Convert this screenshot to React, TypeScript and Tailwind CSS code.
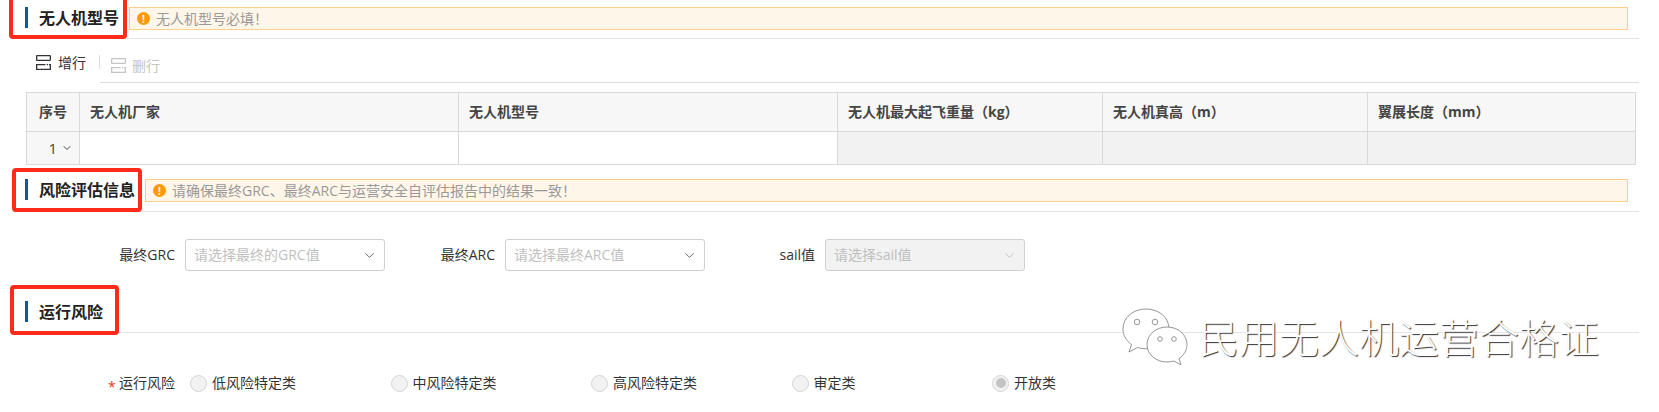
import { ChevronDown } from "lucide-react";

const columns = [
  { title: "序号", width: "w-[53px]", align: "px-0 text-center" },
  { title: "无人机厂家", width: "w-[379px]", align: "px-[10px] text-left" },
  { title: "无人机型号", width: "w-[379px]", align: "px-[10px] text-left" },
  { title: "无人机最大起飞重量（kg）", width: "w-[265px]", align: "px-[10px] text-left" },
  { title: "无人机真高（m）", width: "w-[265px]", align: "px-[10px] text-left" },
  { title: "翼展长度（mm）", width: "w-[268px]", align: "px-[10px] text-left" },
];

const riskOptions = ["低风险特定类", "中风险特定类", "高风险特定类", "审定类", "开放类"];

function Alert({ text }: { text: string }) {
  return (
    <div className="ml-[10px] flex h-[23px] flex-1 items-center border border-[#fbd08a] bg-[#fff6ea] pl-[7px] text-sm leading-none text-[#999]">
      <span className="mr-[6px] flex h-[13px] w-[13px] items-center justify-center rounded-full bg-[#ff9900] text-[10px] font-bold text-white">
        !
      </span>
      {text}
    </div>
  );
}

function SectionHead({ title, alert, height }: { title: string; alert?: string; height: string }) {
  return (
    <div className={`ml-[12px] mr-[20px] flex items-start border-b border-[#e4e4e4] pl-[13px] pr-[11px] pt-[7px] ${height}`}>
      <span className="h-[21px] w-[3px] bg-[#0b5a9e]" />
      <h2 className="ml-[11px] text-base font-bold leading-[22px] text-[#222]">{title}</h2>
      {alert && <Alert text={alert} />}
    </div>
  );
}

function RowIcon({ color }: { color: string }) {
  return (
    <svg width="15" height="15" viewBox="0 0 15 15" fill="none" stroke={color} strokeWidth="1.3">
      <rect x="0.65" y="0.65" width="13.7" height="4.700" rx="0.5" />
      <path d="M9.500 9.650H0.650v4.700h13.700v-4.700H13" />
      <circle cx="11.400" cy="9.600" r="0.8" fill={color} stroke="none" />
    </svg>
  );
}

function SelectBox({ label, placeholder, disabled }: { label: string; placeholder: string; disabled?: boolean }) {
  return (
    <div className="flex w-[320px] items-center">
      <label className="w-[110px] pr-[10px] text-right text-sm leading-none text-[#333]">{label}</label>
      <div
        className={`flex h-[32px] w-[200px] items-center justify-between rounded-[3px] border border-[#d0d0d0] pl-[8px] pr-[7px] text-sm leading-none text-[#bfbfbf] ${
          disabled ? "bg-[#f2f2f2]" : "bg-white"
        }`}
      >
        <span>{placeholder}</span>
        <ChevronDown size={15} strokeWidth={1.6} className={disabled ? "text-[#c4c4c4]" : "text-[#666]"} />
      </div>
    </div>
  );
}

function Radio({ label, checked }: { label: string; checked?: boolean }) {
  return (
    <div className="flex w-[200.5px] items-center">
      <span className="flex h-[17px] w-[17px] items-center justify-center rounded-full border border-[#d4d4d4] bg-[#f2f2f2]">
        {checked && <span className="h-[10px] w-[10px] rounded-full bg-[#c4c4c4]" />}
      </span>
      <span className="ml-[5px] text-sm leading-none text-[#333]">{label}</span>
    </div>
  );
}

function WechatMark() {
  return (
    <svg width="66" height="57" viewBox="0 0 66 57" fill="#fff" stroke="#8a8a8a" strokeWidth="0.9">
      <path d="M24 1C11 1 1 9.500 1 21c0 6.500 3.500 12 8.500 15.500L7 44l8.500-4.500c3 .8 5.500 1.200 9 1.200C37 40.700 47 32 47 21 47 9.500 37 1 24 1Z" />
      <path d="M45 19c-11 0-20 7.500-20 17.500S34 54 45 54c2.500 0 5-.4 7-1l7 4-2-6.500c5-3.300 8-8.500 8-14C65 26.500 56 19 45 19Z" />
      <circle cx="15" cy="14" r="2.800" fill="#fff" />
      <circle cx="33" cy="14" r="2.800" fill="#fff" />
      <circle cx="38" cy="31" r="2.300" fill="#fff" />
      <circle cx="52" cy="31" r="2.300" fill="#fff" />
    </svg>
  );
}

export default function App() {
  return (
    <div className="relative h-[412px] w-[1659px] overflow-hidden bg-white font-['Open_Sans','Noto_Sans_CJK_SC',sans-serif]">
      <SectionHead title="无人机型号" alert="无人机型号必填！" height="h-[39px]" />

      <div className="flex h-[44px] pl-[36px]">
        <div className="flex w-[64px] items-start pt-[16px]">
          <RowIcon color="#333" />
          <span className="ml-[7px] text-sm leading-[16px] text-[#333]">增行</span>
          <span className="ml-[13px] h-[14px] w-px bg-[#ddd]" />
        </div>
        <div className="mr-[20px] flex flex-1 items-start border-b border-[#ddd] pl-[11px] pt-[19px]">
          <RowIcon color="#c4c4c4" />
          <span className="ml-[6px] text-sm leading-[16px] text-[#c4c4c4]">删行</span>
        </div>
      </div>

      <table className="ml-[26px] mt-[9px] w-[1610px] table-fixed border-collapse text-sm">
        <thead>
          <tr className="h-[39px] bg-[#f7f7f7]">
            {columns.map((col) => (
              <th
                key={col.title}
                className={`${col.width} ${col.align} border border-[#d9d9d9] font-bold leading-none text-[#444]`}
              >
                {col.title}
              </th>
            ))}
          </tr>
        </thead>
        <tbody>
          <tr className="h-[33px]">
            <td className="border border-[#d9d9d9] bg-[#f7f7f7]">
              <div className="flex items-center justify-end pr-[6px] text-[15px] leading-none text-[#444]">
                1
                <ChevronDown size={12} strokeWidth={2} className="ml-[4px] text-[#444]" />
              </div>
            </td>
            <td className="border border-[#d9d9d9]" />
            <td className="border border-[#d9d9d9]" />
            <td className="border border-[#d9d9d9] bg-[#f2f2f2]" />
            <td className="border border-[#d9d9d9] bg-[#f2f2f2]" />
            <td className="border border-[#d9d9d9] bg-[#f2f2f2]" />
          </tr>
        </tbody>
      </table>

      <div className="mt-[7px]">
        <SectionHead
          title="风险评估信息"
          alert="请确保最终GRC、最终ARC与运营安全自评估报告中的结果一致！"
          height="h-[40px]"
        />
      </div>

      <div className="ml-[75px] mt-[27px] flex">
        <SelectBox label="最终GRC" placeholder="请选择最终的GRC值" />
        <SelectBox label="最终ARC" placeholder="请选择最终ARC值" />
        <SelectBox label="sail值" placeholder="请选择sail值" disabled />
      </div>

      <div className="mt-[23px]">
        <SectionHead title="运行风险" height="h-[39px]" />
      </div>

      <div className="ml-[108px] mt-[38px] flex h-[24px] items-center">
        <span className="mt-[8px] w-[11px] text-sm leading-none text-[#e8380d]">*</span>
        <span className="w-[71px] text-sm leading-none text-[#333]">运行风险</span>
        {riskOptions.map((option) => (
          <Radio key={option} label={option} checked={option === "开放类"} />
        ))}
      </div>

      {/* annotation frames and watermark sit on top of the page */}
      <div className="absolute left-[9px] top-[-6px] h-[45px] w-[118px] rounded-[4px] border-[4px] border-[#ff2a1a]" />
      <div className="absolute left-[12px] top-[168px] h-[44px] w-[130px] rounded-[4px] border-[4px] border-[#ff2a1a]" />
      <div className="absolute left-[10px] top-[285px] h-[50px] w-[109px] rounded-[4px] border-[4px] border-[#ff2a1a]" />

      <div className="absolute left-[1122px] top-[308px] flex items-center">
        <WechatMark />
        <span className="ml-[11px] mt-[3px] whitespace-nowrap text-[40px] font-light leading-none text-white [text-shadow:1px_1px_1px_#333]">
          民用无人机运营合格证
        </span>
      </div>
    </div>
  );
}
